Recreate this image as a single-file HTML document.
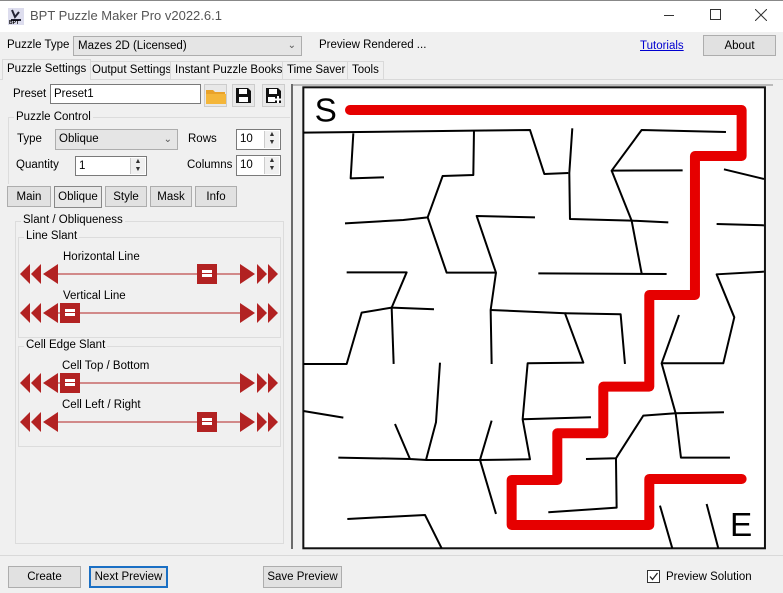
<!DOCTYPE html>
<html><head><meta charset="utf-8"><style>
*{box-sizing:border-box;margin:0;padding:0}
body{width:783px;height:593px;background:#f0f0f0;font-family:"Liberation Sans",sans-serif;font-size:11.5px;color:#000;position:relative;overflow:hidden}
.a{position:absolute;white-space:nowrap}
.btn{position:absolute;background:#e1e1e1;border:1px solid #adadad;text-align:center;line-height:20px}
.inp{position:absolute;background:#fff;border:1px solid #7a7a7a;padding-left:3px;line-height:18px}
.grp{position:absolute;border:1px solid #dcdcdc}
.lbl{position:absolute;background:#f0f0f0;padding:0 2px;line-height:13px}
.tab{position:absolute;top:61px;height:18px;border:1px solid #d9d9d9;border-bottom:none;background:#f0f0f0;line-height:17px;padding:0 4px}
.spin{position:absolute;right:1px;top:1px;bottom:1px;width:15px;background:#f0f0f0;border-left:1px solid #ccc;font-size:7px;text-align:center;line-height:8px;color:#333}
</style></head><body>
<div class="a" style="left:0;top:0;width:783px;height:32px;background:#fff;border-top:1px solid #888"></div>
<svg class="a" style="left:8px;top:8px" width="16" height="17"><rect x="0" y="0" width="16" height="17" fill="#dde"/><path d="M4 2 L7 9 L11 4 M3 12 L13 12" stroke="#223" stroke-width="2" fill="none"/><text x="1" y="16" font-size="5" font-family="Liberation Sans" font-weight="bold">BPT</text></svg>
<div class="a" style="left:30px;top:8px;font-size:13px;color:#555">BPT Puzzle Maker Pro v2022.6.1</div>
<div class="a" style="left:664px;top:15px;width:10px;height:1px;background:#333"></div>
<div class="a" style="left:710px;top:9px;width:11px;height:11px;border:1px solid #333"></div>
<svg class="a" style="left:755px;top:9px" width="12" height="12"><path d="M0 0L12 12M12 0L0 12" stroke="#333"/></svg>

<div class="a" style="left:7px;top:39px">Puzzle Type</div>
<div class="a" style="left:73px;top:36px;width:229px;height:20px;background:#e5e5e5;border:1px solid #adadad;padding-left:4px;line-height:18px">Mazes 2D (Licensed)<span style="position:absolute;right:5px;top:0;font-size:10px;color:#555">&#8964;</span></div>
<div class="a" style="left:319px;top:39px">Preview Rendered ...</div>
<div class="a" style="left:640px;top:40px;color:#0000d0;text-decoration:underline">Tutorials</div>
<div class="btn" style="left:703px;top:35px;width:73px;height:21px">About</div>

<div class="tab" style="left:87px">Output Settings</div>
<div class="tab" style="left:170px">Instant Puzzle Books</div>
<div class="tab" style="left:282px">Time Saver</div>
<div class="tab" style="left:347px">Tools</div>
<div class="a" style="left:0;top:79px;width:783px;height:477px;border-top:1px solid #d9d9d9;border-bottom:1px solid #d9d9d9;background:#f0f0f0"></div>
<div class="tab" style="left:2px;top:59px;height:21px;background:#f0f0f0;padding-top:1px">Puzzle Settings</div>

<div class="a" style="left:13px;top:88px">Preset</div>
<div class="inp" style="left:50px;top:84px;width:151px;height:20px">Preset1</div>
<div class="a" style="left:204px;top:84px;width:23px;height:23px;background:#e8e8e8;border:1px solid #ccc"></div>
<svg class="a" style="left:206px;top:88px" width="20" height="16"><path d="M0 2h7l2 2h10v12H0z" fill="#e9a22a"/><path d="M0 6h20v10H0z" fill="#f4b63a"/></svg>
<div class="a" style="left:232px;top:84px;width:23px;height:23px;background:#e8e8e8;border:1px solid #ccc"></div>
<svg class="a" style="left:235px;top:87px" width="17" height="17"><path d="M1 1h12l3 3v12H1z" fill="#111"/><rect x="4" y="2" width="8" height="5" fill="#fff"/><rect x="4" y="10" width="9" height="5" fill="#fff"/></svg>
<div class="a" style="left:262px;top:84px;width:23px;height:23px;background:#e8e8e8;border:1px solid #ccc"></div>
<svg class="a" style="left:265px;top:87px" width="17" height="17"><path d="M1 1h12l3 3v12H1z" fill="#111"/><rect x="4" y="2" width="8" height="5" fill="#fff"/><rect x="3" y="10" width="7" height="5" fill="#fff"/><path d="M13 9v7M9.5 12.5h7" stroke="#fff" stroke-width="2"/></svg>

<div class="grp" style="left:8px;top:117px;width:282px;height:67px;border-bottom:none;border-right:none"></div>
<div class="lbl" style="left:14px;top:111px">Puzzle Control</div>
<div class="a" style="left:17px;top:133px">Type</div>
<div class="a" style="left:55px;top:129px;width:123px;height:21px;background:#e5e5e5;border:1px solid #adadad;padding-left:3px;line-height:19px">Oblique<span style="position:absolute;right:5px;top:0;font-size:10px;color:#555">&#8964;</span></div>
<div class="a" style="left:188px;top:133px">Rows</div>
<div class="inp" style="left:236px;top:129px;width:45px;height:21px">10<div class="spin">&#9650;<br>&#9660;</div></div>
<div class="a" style="left:16px;top:159px">Quantity</div>
<div class="inp" style="left:75px;top:156px;width:72px;height:20px">1<div class="spin">&#9650;<br>&#9660;</div></div>
<div class="a" style="left:187px;top:159px">Columns</div>
<div class="inp" style="left:236px;top:155px;width:45px;height:21px">10<div class="spin">&#9650;<br>&#9660;</div></div>

<div class="btn" style="left:7px;top:186px;width:44px;height:21px">Main</div>
<div class="btn" style="left:54px;top:186px;width:48px;height:22px;background:#e8e8e8;border-color:#888;line-height:21px">Oblique</div>
<div class="btn" style="left:105px;top:186px;width:42px;height:21px">Style</div>
<div class="btn" style="left:150px;top:186px;width:42px;height:21px">Mask</div>
<div class="btn" style="left:195px;top:186px;width:42px;height:21px">Info</div>

<div class="grp" style="left:15px;top:221px;width:269px;height:323px"></div>
<div class="lbl" style="left:21px;top:214px">Slant / Obliqueness</div>
<div class="grp" style="left:18px;top:237px;width:263px;height:101px"></div>
<div class="lbl" style="left:24px;top:230px">Line Slant</div>
<div class="grp" style="left:18px;top:346px;width:263px;height:101px"></div>
<div class="lbl" style="left:24px;top:339px">Cell Edge Slant</div>
<div class="a" style="left:63px;top:251px">Horizontal Line</div>
<div class="a" style="left:63px;top:290px">Vertical Line</div>
<div class="a" style="left:62px;top:360px">Cell Top / Bottom</div>
<div class="a" style="left:62px;top:399px">Cell Left / Right</div>
<svg class="a" style="left:0;top:0" width="290" height="440">
<defs><g id="sl" fill="#b22222"><path d="M20 0l10-10v20zM31 0l10-10v20zM43 0l15-10v20zM255 0l-15-10v20zM257 -10l10 10l-10 10zM268 -10l10 10l-10 10z"/><path d="M58 0H240" stroke="#b22222" stroke-width="1"/></g>
<g id="th"><rect x="0" y="-10" width="20" height="20" fill="#b22222"/><rect x="5" y="-4" width="10" height="7" fill="#fff"/><path d="M5 -0.5h10" stroke="#b22222"/></g></defs>
<use href="#sl" y="274"/><use href="#th" x="197" y="274"/>
<use href="#sl" y="313"/><use href="#th" x="60" y="313"/>
<use href="#sl" y="383"/><use href="#th" x="60" y="383"/>
<use href="#sl" y="422"/><use href="#th" x="197" y="422"/>
</svg>

<div class="a" style="left:291px;top:84px;width:2px;height:465px;background:#6b6b6b"></div>
<div class="a" style="left:293px;top:84px;width:480px;height:2px;background:#bbb"></div>
<svg class="a" style="left:0;top:0" width="783" height="593">
<g transform="translate(300,80) scale(0.3333)">
<rect x="10" y="22" width="1385" height="1383" fill="#fff" stroke="#111" stroke-width="6"/>
<g fill="none" stroke="#000" stroke-width="6" stroke-linejoin="round">
<polyline points="10,158 520,152 690,150 733,282 805,279"/>
<polyline points="160,160 152,295 252,292"/>
<polyline points="522,152 520,285 428,288 383,412 310,420 135,430"/>
<polyline points="383,412 440,578 588,578 530,408 705,412"/>
<polyline points="588,578 572,690 575,852"/>
<polyline points="572,690 795,700 850,848 683,850 668,1018 690,1138 540,1140 380,1140 330,1137 285,1032"/>
<polyline points="330,1137 115,1133"/>
<polyline points="817,145 808,279 810,417 995,422 1105,427"/>
<polyline points="995,422 1025,580"/><polyline points="715,580 1100,582"/>
<polyline points="1278,156 1025,150 935,272 1148,271"/><polyline points="935,272 995,422"/>
<polyline points="1272,268 1392,297"/><polyline points="1250,432 1392,436"/>
<polyline points="140,577 320,577 275,683 402,688"/><polyline points="275,683 185,698 140,852 10,852"/><polyline points="275,683 281,852"/>
<polyline points="795,700 962,703 975,852"/>
<polyline points="1392,575 1250,583 1303,712 1270,850 1085,850 1137,705"/>
<polyline points="1085,850 1127,1000 1143,1133 1290,1133"/>
<polyline points="1127,1000 1272,997"/><polyline points="1127,1000 1030,1007 948,1135 858,1137"/>
<polyline points="948,1135 950,1283 745,1297"/>
<polyline points="668,1018 873,1012"/><polyline points="10,993 130,1013"/>
<polyline points="420,848 408,1027 378,1140"/>
<polyline points="575,1022 540,1140 588,1302"/>
<polyline points="142,1317 375,1305 425,1405"/>
<polyline points="1080,1277 1117,1405"/><polyline points="1220,1272 1255,1405"/>
</g>
<polyline fill="none" stroke="#e60000" stroke-width="30" stroke-linecap="round" stroke-linejoin="round" points="150,90 1325,90 1325,228 1185,228 1185,645 1048,645 1048,920 910,920 910,1060 772,1060 772,1200 635,1200 635,1335 1048,1335 1048,1197 1325,1197"/>
<text x="44" y="124" font-family="Liberation Sans" font-size="100">S</text>
<text x="1290" y="1368" font-family="Liberation Sans" font-size="100">E</text>
</g></svg>

<div class="btn" style="left:8px;top:566px;width:73px;height:22px">Create</div>
<div class="btn" style="left:89px;top:566px;width:79px;height:22px;border:2px solid #1a6fc4;line-height:18px">Next Preview</div>
<div class="btn" style="left:263px;top:566px;width:79px;height:22px">Save Preview</div>
<div class="a" style="left:647px;top:570px;width:13px;height:13px;border:1px solid #333;background:#fff"></div>
<svg class="a" style="left:648px;top:571px" width="11" height="11"><path d="M2 5.5l2.5 3L9.5 2" stroke="#222" stroke-width="1.3" fill="none"/></svg>
<div class="a" style="left:666px;top:571px">Preview Solution</div>
</body></html>
